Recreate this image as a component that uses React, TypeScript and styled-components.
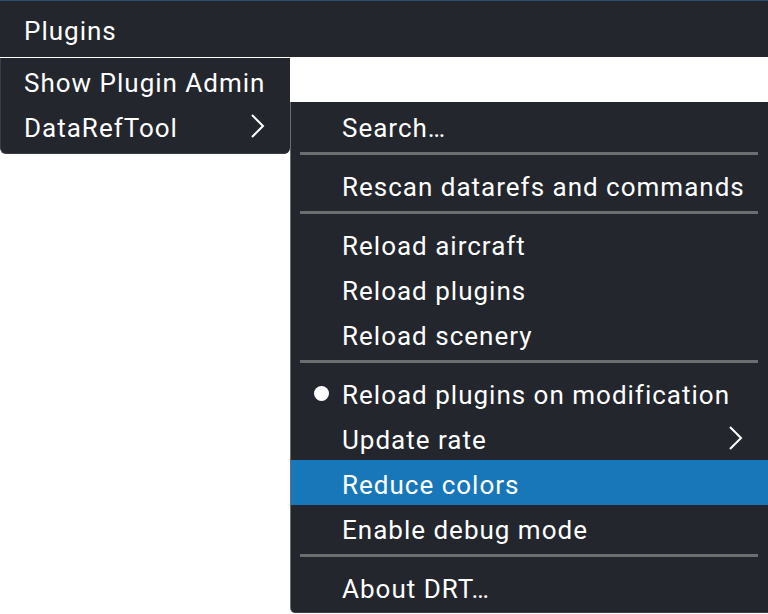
import React from "react";
import styled, { createGlobalStyle } from "styled-components";

const Global = createGlobalStyle`
  html, body { margin: 0; padding: 0; background: #ffffff; }
  body { width: 768px; height: 614px; overflow: hidden; font-family: Roboto, "Liberation Sans", sans-serif; }
`;

const Page = styled.div`
  position: relative;
  width: 768px;
  height: 614px;
  background: #ffffff;
`;

const MenuBar = styled.div`
  height: 57px;
  box-sizing: border-box;
  background: #23262d;
  border-top: 1px solid #2b4d6e;
  display: flex;
  align-items: center;
  padding: 4px 0 0 24px;
  color: #ffffff;
  font-size: 26px;
  letter-spacing: 1px;
`;

const Panel = styled.div`
  position: absolute;
  background: #23262d;
  color: #ffffff;
  font-size: 26px;
  letter-spacing: 1px;
  box-sizing: border-box;
  display: flex;
  flex-direction: column;
`;

const Dropdown = styled(Panel)`
  left: 0;
  top: 58px;
  width: 290px;
  padding: 0 0 5px;
  border-radius: 0 0 6px 6px;
  border-left: 1px solid #3a3d44;
  border-bottom: 1px solid #3a3d44;
`;

const Submenu = styled(Panel)`
  left: 290px;
  top: 102px;
  width: 478px;
  padding: 1px 0 3px;
  border-left: 1px solid #6a6c70;
  border-bottom: 1px solid #3a3d44;
  border-radius: 0 0 0 5px;
`;

const Row = styled.div<{ $active?: boolean; $indent: number }>`
  height: 45px;
  box-sizing: border-box;
  display: flex;
  align-items: center;
  position: relative;
  padding: 4px 24px 0 ${(p) => p.$indent}px;
  background: ${(p) => (p.$active ? "#1877b8" : "transparent")};
  white-space: nowrap;
`;

const Label = styled.span`
  flex: 1;
`;

const Bullet = styled.span`
  position: absolute;
  left: 23px;
  top: 16px;
  width: 15px;
  height: 15px;
  border-radius: 50%;
  background: #ffffff;
`;

const Separator = styled.div`
  height: 3px;
  margin: 4px 10px 7px 9px;
  background: #6b6d70;
`;

const ChevronSvg = styled.svg`
  flex: none;
  margin-top: -3px;
`;

const Chevron = () => (
  <ChevronSvg width="16" height="24" viewBox="0 0 16 24">
    <path d="M2 1 L13 12 L2 23" fill="none" stroke="#ffffff" strokeWidth="2" />
  </ChevronSvg>
);

export default function App() {
  return (
    <Page>
      <Global />
      <MenuBar>Plugins</MenuBar>
      <Dropdown>
        <Row $indent={23}>
          <Label>Show Plugin Admin</Label>
        </Row>
        <Row $indent={23}>
          <Label>DataRefTool</Label>
          <Chevron />
        </Row>
      </Dropdown>
      <Submenu>
        <Row $indent={51}>
          <Label>Search…</Label>
        </Row>
        <Separator />
        <Row $indent={51}>
          <Label>Rescan datarefs and commands</Label>
        </Row>
        <Separator />
        <Row $indent={51}>
          <Label>Reload aircraft</Label>
        </Row>
        <Row $indent={51}>
          <Label>Reload plugins</Label>
        </Row>
        <Row $indent={51}>
          <Label>Reload scenery</Label>
        </Row>
        <Separator />
        <Row $indent={51}>
          <Bullet />
          <Label>Reload plugins on modification</Label>
        </Row>
        <Row $indent={51}>
          <Label>Update rate</Label>
          <Chevron />
        </Row>
        <Row $indent={51} $active>
          <Label>Reduce colors</Label>
        </Row>
        <Row $indent={51}>
          <Label>Enable debug mode</Label>
        </Row>
        <Separator />
        <Row $indent={51}>
          <Label>About DRT…</Label>
        </Row>
      </Submenu>
    </Page>
  );
}
